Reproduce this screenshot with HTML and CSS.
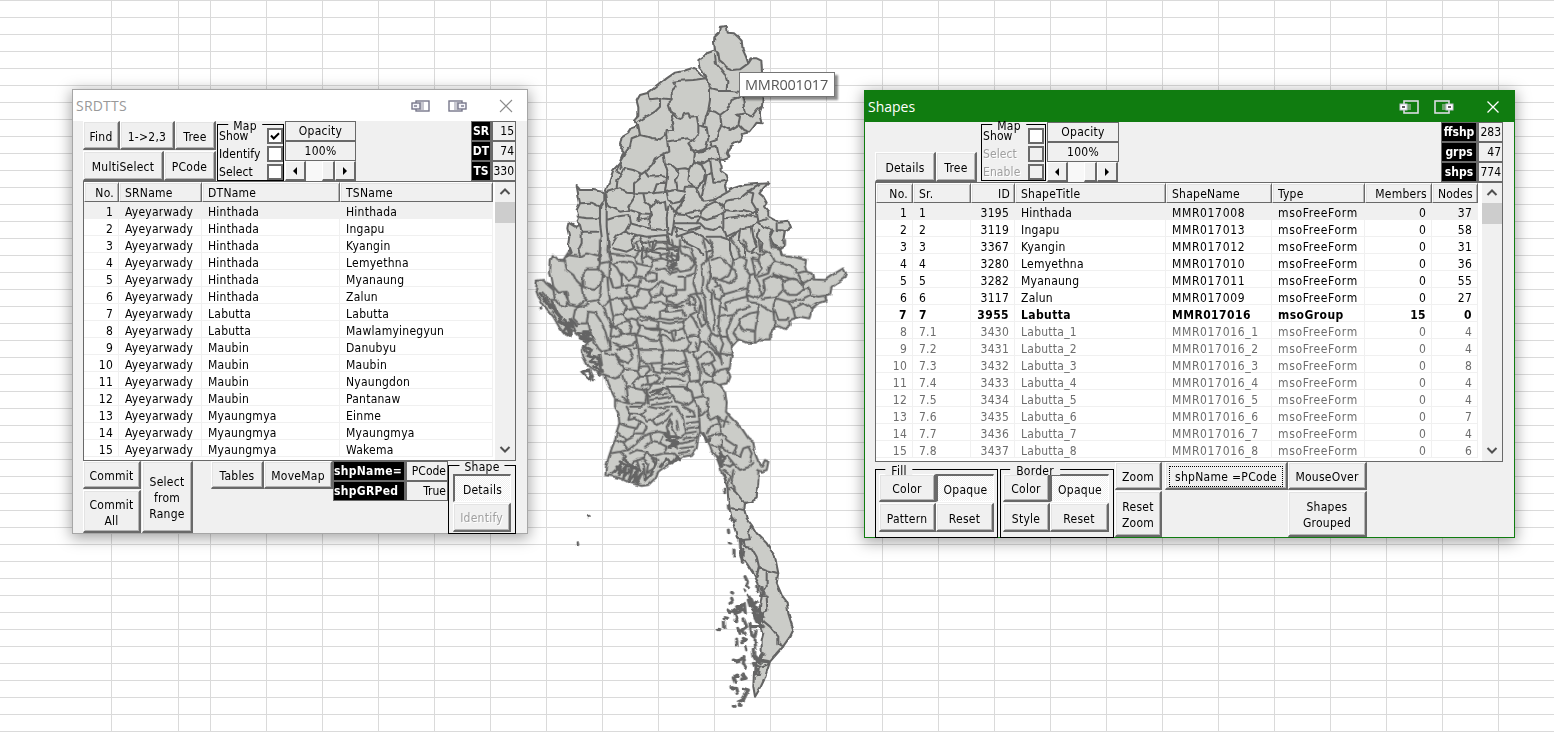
FILE: index.html
```html
<!DOCTYPE html>
<html lang="en">
<head>
<meta charset="utf-8">
<title>Township shapes</title>
<link rel="stylesheet" href="styles.css">
</head>
<body>
<main class="sheet">
<svg class="map" width="1554" height="732" viewBox="0 0 1554 732">
  <defs>
    <filter id="rough" x="0" y="0" width="1554" height="732" filterUnits="userSpaceOnUse" color-interpolation-filters="sRGB">
      <feTurbulence type="fractalNoise" baseFrequency="0.15" numOctaves="1" seed="4" result="n"/>
      <feDisplacementMap in="SourceGraphic" in2="n" scale="4" xChannelSelector="R" yChannelSelector="G"/>
    </filter>
  </defs>
  <g filter="url(#rough)">
    <!-- land -->
    <g class="land">
      <path transform="translate(560 10) scale(.33333)" d="M480,50 500,48 503,68 522,70 535,82 545,92 548,118 558,140 565,160 575,145 590,145 604,152 606,185 608,262 606,290 600,305 600,322 605,340 590,338 580,352 568,367 545,372 548,385 540,395 525,400 508,412 500,430 508,443 490,450 478,448 485,470 485,485 500,495 505,510 495,525 500,548 520,535 550,525 590,522 625,520 610,535 598,550 610,560 620,578 612,590 625,605 625,620 640,628 655,635 685,632 693,652 675,662 670,690 672,705 660,715 665,735 700,740 735,745 660,800 30,800 5,750 20,740 35,728 25,700 28,680 22,655 25,638 45,650 60,645 50,635 55,620 50,600 60,580 55,555 50,528 60,540 100,540 130,545 135,550 148,515 160,480 178,460 190,430 190,415 180,405 185,382 205,370 215,355 235,348 222,332 235,318 235,292 230,272 240,255 265,248 295,225 320,205 345,188 370,183 395,175 410,182 425,198 438,205 428,185 418,172 415,150 430,140 445,125 465,118 462,100 463,82 476,70Z"/>
      <path transform="translate(520 240) scale(.33333)" d="M150,30 785,30 785,45 810,48 840,55 858,60 855,80 860,95 875,100 880,118 915,120 945,100 970,85 978,100 972,115 935,140 930,165 915,170 920,182 895,190 875,205 868,235 840,230 810,240 812,255 795,267 775,258 760,265 750,285 750,298 720,298 710,308 680,308 655,298 635,320 638,335 632,360 630,380 622,395 628,410 620,430 600,435 615,455 620,490 618,515 630,530 645,545 665,565 685,595 700,605 705,640 715,665 725,680 735,660 745,665 740,690 725,695 715,690 715,720 712,755 625,755 615,715 605,700 600,680 592,655 575,635 565,605 555,590 540,575 535,590 530,625 515,645 490,650 460,665 435,680 415,695 405,715 385,735 365,738 330,728 300,715 275,708 256,705 258,680 265,655 275,625 285,600 290,575 298,550 295,520 285,500 285,475 275,455 262,430 255,405 235,400 205,380 190,350 185,330 205,305 180,290 160,270 140,290 120,265 100,230 75,200 55,170 48,150 50,122 70,120 80,132 100,140 95,115 90,100 92,60 98,45 110,58 130,60 140,45Z"/>
      <path transform="translate(560 440) scale(.33333)" d="M505,140 593,140 590,175 575,185 555,188 553,210 560,235 575,255 590,280 620,310 645,350 655,400 650,430 665,465 680,485 685,520 700,570 690,590 665,625 630,665 622,690 612,720 600,745 585,770 580,740 582,700 585,670 600,655 605,640 605,600 610,580 600,550 600,500 605,470 595,430 580,400 560,370 545,350 545,300 530,290 520,250 510,215 505,180Z"/>
    </g>
    <!-- northern townships -->
    <path class="border" transform="translate(560 10) scale(.33333)" d="M20,740 35,728 25,700 28,680 22,655 25,638 45,650 60,645 50,635 55,620 50,600 60,580 55,555 50,528 60,540 100,540 130,545 135,550 148,515 160,480 178,460 190,430 190,415 180,405 185,382 205,370 215,355 235,348 222,332 235,318 235,292 230,272 240,255 265,248 295,225 320,205 345,188 370,183 395,175 410,182 425,198 438,205 428,185 418,172 415,150 430,140 445,125 465,118 462,100 463,82 476,70 480,50 500,48 503,68 522,70 535,82 545,92 548,118 558,140 565,160 575,145 590,145 604,152 606,185 608,262 606,290 600,305 600,322 605,340 590,338 580,352 568,367 545,372 548,385 540,395 525,400 508,412 500,430 508,443 490,450 478,448 485,470 485,485 500,495 505,510 495,525 500,548 520,535 550,525 590,522 625,520 610,535 598,550 610,560 620,578 612,590 625,605 625,620 640,628 655,635 685,632 693,652 675,662 670,690 672,705 660,715 665,735
    M465,118 475,130 478,150 490,160 500,172 520,180 540,178 565,160 M465,135 468,160 480,175 495,195 502,215 500,240 M438,205 450,225 455,238 475,243 500,242 540,245
    M265,248 270,268 300,265 335,268 335,245 350,230 340,215 360,212 400,210 438,205 M335,268 322,280 330,305 345,312 355,325 365,328 372,312 385,310 390,320 410,318 415,345
    M235,335 262,318 285,305 300,290 300,270 M235,348 240,375 262,380 275,385 285,385 300,388 318,375 320,360 340,360 335,335 340,312 M450,240 450,270 445,300 435,330 432,350 M445,300 465,305 480,315 500,300 515,270 540,262
    M415,345 440,352 445,385 438,415 415,425 395,415 385,400 400,390 415,370 415,345 M480,315 485,345 475,365 470,390 M482,345 510,360 535,345 540,320 530,315 555,310 575,320 590,300 605,290 M550,262 552,295 555,310 M535,345 550,360 568,367
    M470,390 455,395 452,410 470,408 475,430 478,448 M318,375 322,395 350,390 385,385 400,395 M322,395 325,425 310,432 315,460 335,465 350,478 375,475 390,478 402,455 405,430 395,415
    M240,375 215,385 210,410 195,430 180,455 185,475 M310,432 285,445 275,465 255,485 245,492 220,480 195,475 185,495 172,485 178,460 M405,430 430,425 450,415 M478,448 455,445 430,460 405,455
    M185,495 172,510 170,535 M245,492 240,505 222,520 222,550 M315,460 322,485 320,510 315,545 M255,485 265,500 300,498 315,500 M350,478 355,490 345,510 350,540 M390,478 385,510 400,530 375,530 372,545
    M402,455 425,465 435,485 432,510 415,530 400,530 M450,445 455,485 460,515 485,515 505,510 M455,485 440,495 435,520 430,540 425,560 435,575 420,560 410,535 M433,575 460,570 500,548
    M135,550 145,545 180,535 200,548 222,550 225,560 205,590 210,600 180,605 150,590 140,580 135,550 M130,545 130,575 120,590 120,640 125,680 120,720 115,750 M135,560 140,600 140,650 145,700 150,730 155,750
    M60,580 95,578 120,590 M50,620 80,625 115,625 M60,645 65,665 115,665 M65,665 65,700 55,720 60,735 M222,550 250,550 255,575 275,590 290,570 300,580 315,575 318,600 M210,600 240,610 275,612 270,590 M280,550 290,520 315,518 M250,550 280,550 320,545 345,540 375,545
    M320,545 325,570 340,580 360,575 375,555 M375,555 365,580 345,610 M325,590 320,620 322,670 335,675 340,650 345,610 330,585 M345,610 375,612 425,600 435,590 465,575 490,590 495,605 470,620 440,630 420,620 425,600
    M495,600 520,603 550,600 580,610 590,600 575,575 580,550 565,545 540,565 500,572 485,590 M565,545 598,525 M495,625 530,620 560,615 590,620 M345,640 380,640 420,640 435,655 460,660 480,650 495,665 500,680 530,665 545,655 575,650 595,635 620,628
    M375,612 395,625 420,620 410,640 M350,655 385,662 420,650 M490,610 490,655 M590,600 595,635 610,650 M595,660 590,680 605,700 600,725 M610,650 640,660 630,680 640,705 660,715 M650,640 650,660 675,662 M575,650 580,680 590,710 575,730
    M140,630 170,620 205,615 210,640 195,665 170,680 155,705 M240,610 235,630 265,625 275,612 M210,640 265,655 315,660 M265,625 270,655 M195,665 230,675 260,680 320,675 M230,675 215,690 220,715 200,725 160,715 M245,700 275,695 320,695 M240,680 250,710 245,740 M280,695 275,725 300,730 M320,675 325,700 355,715 355,750
    M345,650 350,680 380,670 400,665 440,690 455,710 460,720 440,725 M365,680 380,700 410,715 430,735 M440,680 480,680 510,690 525,670 M510,690 510,720 520,750 M540,660 535,690 555,710 555,740 M225,720 260,725 300,715 350,720"/>
    <!-- central townships -->
    <path class="border" transform="translate(520 240) scale(.33333)" d="M795,0 795,15 780,25 785,45 810,48 840,55 858,60 855,80 860,95 875,100 880,118 915,120 945,100 970,85 978,100 972,115 935,140 930,165 915,170 920,182 895,190 875,205 868,235 840,230 810,240 812,255 795,267 775,258 760,265 750,285 750,298 720,298 710,308 680,308 655,298 635,320 638,335 632,360 630,380 622,395 628,410 620,430 600,435 615,455 620,490 618,515 630,530 645,545 665,565 685,595 700,605 705,640 715,665 725,680 735,660 745,665 740,690 725,695 715,690 715,720 712,750
    M625,750 615,715 605,700 600,680 592,655 575,635 565,605 555,590 540,575 535,590 530,625 515,645 490,650 460,665 435,680 415,695 405,715 385,735 365,738 330,728 300,715 275,708 256,705 258,680 265,655 275,625 285,600 290,575 298,550 295,520 285,500 285,475 275,455 262,430 255,405 235,400 205,380 190,350 185,330 205,305 180,290 160,270 140,290 120,265 100,230 75,200 55,170 48,150 50,122 70,120 80,132 100,140 95,115 90,100 92,60 98,45 110,58 130,60 140,45 150,30
    M140,45 180,50 200,40 235,50 240,70 235,85 200,85 190,100 185,140 170,125 160,105 140,90 135,60 M235,85 250,100 245,130 220,150 190,140 190,100 M240,70 270,65 M240,0 240,70 M265,0 262,30 270,65 268,110 280,145 M185,140 190,170 200,180 205,195 180,200 165,210 160,235 M245,130 240,160 235,180 205,185 M135,160 150,195 M100,140 115,158 140,155 145,185 140,200 120,195 110,180
    M245,105 262,110 265,150 270,180 M235,180 250,200 262,230 275,260 270,300 272,330 M150,195 170,200 200,180 M80,132 100,150 105,180 85,180 70,160 M160,235 175,250 200,250 205,215 225,218 240,240 255,270 265,310 270,330 245,335 235,325 215,290 205,250 M250,200 270,180
    M270,65 290,82 305,110 305,140 280,145 270,110 M270,40 310,45 345,50 360,30 345,10 365,0 M280,70 310,65 340,70 350,85 345,110 325,120 305,100 M345,50 350,70 370,75 365,55 380,45 375,25 395,30 410,10 405,0 M385,0 390,20 M380,45 400,60 395,80 370,75 M400,60 425,55 440,60 455,75 M410,10 440,10 445,40 420,45 425,55
    M345,110 375,115 385,95 395,80 M385,95 410,100 410,120 380,125 375,115 M410,90 435,85 450,100 470,95 M280,145 310,140 325,135 355,140 360,120 M325,135 320,160 330,175 350,165 360,145 M270,180 300,175 330,175 M360,145 385,150 410,140 420,125 M385,150 395,170 420,165 425,140 M420,125 440,130 465,140 470,160 440,170 425,160
    M440,10 445,40 440,75 455,95 M445,50 460,45 475,50 470,70 455,75 460,90 472,85 M485,40 510,50 525,70 510,90 480,95 470,85 M480,0 480,30 485,40 M440,25 480,20 M455,0 460,20 M480,15 510,25 520,50 530,70 525,100 495,110 475,110 M495,110 495,150 470,150 M525,100 520,130 530,160 510,165 505,190
    M270,180 275,210 280,230 310,220 320,200 305,180 M310,220 320,240 335,235 350,240 360,225 345,205 320,210 M280,230 275,260 300,250 325,245 335,260 330,280 305,285 295,265 M275,290 305,285 345,280 350,300 340,315 300,320 280,310 M275,260 295,265
    M330,175 340,200 370,205 390,190 395,170 M390,190 420,185 440,195 440,210 420,215 420,235 390,235 360,225 M440,170 440,185 470,195 500,180 M440,195 465,200 490,200 M420,215 450,215 490,210 495,225 M420,235 450,240 490,235 M360,240 395,240 415,245 415,265 380,265 360,255 M415,245 450,250 490,245 M415,265 445,275 490,265 M350,240 360,265 350,285 M380,265 400,270 420,270 420,300 395,300 370,290 M350,285 370,290
    M350,300 355,325 M355,330 430,330 M420,300 430,330 490,332 M415,285 440,290 455,305 490,295 M455,275 460,300 M467,275 465,300 M490,265 500,290 520,285 540,290 535,265 520,235 510,225 495,240 490,265 M500,190 525,195 530,215 510,225 M505,170 520,170 525,195 M430,330 425,370 430,400 M355,330 360,360 355,390
    M290,330 310,320 330,330 340,350 325,370 300,360 285,345 M340,325 355,325 M255,340 285,345 300,370 310,385 300,410 285,415 255,405 M360,365 390,370 425,368 M430,370 470,372 500,362 490,332 M310,385 350,390 360,410 340,430 345,445 320,440 310,410 M360,380 385,378 390,390 375,405 M395,375 400,395 425,400 M430,385 470,388 500,380 M435,400 455,395 490,405 500,395 M435,415 470,415 495,425
    M360,410 380,410 385,430 365,440 M385,410 410,405 420,415 400,430 385,435 M400,430 430,430 435,415 M345,445 370,450 385,445 395,435 M370,450 380,465 390,470 M390,455 430,445 440,450 M395,465 440,460 M390,480 420,475 450,470 M395,495 430,490 455,485 M385,500 410,505 445,500 M440,440 450,460 470,485 500,495 520,480 515,455 490,440 440,440 M325,490 310,470 M320,440 325,490 285,480 M325,490 355,488 375,490 380,465
    M490,332 520,335 530,360 540,390 540,420 510,425 505,395 495,362 M510,425 500,440 515,455 520,475 550,468 545,440 535,425 M530,360 545,345 560,335 575,340 585,360 570,370 545,375 M545,375 550,395 575,410 585,390 575,370 M575,410 600,390 622,385 M575,410 580,425 600,435 M545,440 555,425 580,425 M550,468 565,475 562,510 540,530 535,500 520,475 M500,290 510,310 500,330 M540,290 540,310 555,305 575,325 590,340 M525,310 535,330 520,335 M540,310 535,325
    M550,0 560,40 560,60 545,75 550,120 545,160 530,160 M570,0 580,30 575,45 565,60 570,100 565,120 M575,60 600,50 620,65 635,85 625,105 600,120 575,115 565,95 M545,160 555,180 560,250 575,280 M565,120 560,140 575,160 575,190 585,230 580,270 M585,140 600,135 610,160 600,180 585,175 580,150 M585,120 590,135 M530,165 540,180 555,250 545,260 535,230 540,195
    M600,120 630,130 650,110 645,90 635,85 M635,85 640,60 660,50 650,20 635,0 M660,50 680,60 675,85 690,105 705,100 700,75 695,55 715,60 M670,0 685,30 720,45 715,60 725,85 710,105 M720,45 740,35 755,45 765,65 745,80 745,100 715,110 M765,65 800,75 830,85 825,100 855,95 M755,70 745,100 M760,100 790,110 830,120 M715,0 720,30 740,35 M750,0 755,20 780,25
    M690,105 685,130 680,165 710,175 725,165 720,140 705,105 M725,165 735,150 730,120 760,105 785,115 790,150 770,170 725,175 M785,125 820,115 845,130 850,150 830,165 805,165 790,150 M830,100 850,130 875,115 M850,150 865,145 870,165 840,180 805,185 M870,165 895,170 930,165 M805,185 770,175 760,200 775,240 800,240 805,230 M805,185 820,210 825,230 M820,205 850,190 875,205
    M605,165 640,155 680,145 M600,185 600,200 620,210 615,190 640,180 680,170 M680,165 685,185 715,190 715,215 690,220 660,235 655,250 670,270 705,275 710,240 715,215 M715,190 740,205 760,215 765,265 M600,230 640,225 655,210 690,200 M640,225 630,250 620,275 625,300 M600,200 595,260 600,290 620,290 M620,290 635,315 M655,250 640,280 655,300 M705,275 705,305
    M575,280 600,290 610,310 600,340 605,370 M575,280 565,300 590,330 600,355 M600,340 632,345
    M298,550 325,560 350,565 360,545 345,535 325,540 330,520 320,500 M330,500 365,500 375,490 M330,520 360,525 380,510 M365,525 380,545 400,540 415,525 445,510 M400,540 410,555 440,540 455,520 M360,545 380,560 370,580 350,580 M290,575 320,600 340,590 345,570 M285,600 310,610 320,600 M310,610 325,630 350,610 365,590 M270,640 300,635 325,630 M365,590 390,580 395,605 375,620 M390,580 415,575 440,580 M395,605 420,610 430,590
    M455,500 470,500 490,540 495,580 475,595 455,560 450,540 M490,500 520,515 525,530 500,530 M450,540 440,560 445,580 M470,540 475,570 M500,550 535,545 M500,565 535,560 M495,580 530,575 M490,595 530,590 M485,610 525,600 M480,625 520,620 M475,640 505,635 M420,610 440,620 430,640 390,650 385,635 M430,640 460,640 475,655 M300,635 315,650 300,680 275,700 M330,640 350,630 380,635 370,655 340,665 M350,660 360,690 M370,655 385,670 380,700 400,690 415,660 395,655 M340,665 325,690
    M535,500 538,540 540,575 M562,510 570,540 590,530 600,550 570,560 560,580 M590,530 605,540 625,550 M600,550 605,580 620,600 650,620 640,640 660,650 670,625 685,620 M605,580 580,585 565,590 M605,600 605,620 630,640 640,640 M575,615 600,620 605,650 590,655 M605,650 625,650 640,670 630,680 M640,670 660,690 690,680 700,665 M685,620 695,640 690,665 M630,680 610,670 M640,690 635,720 645,750 M610,690 630,705 625,730 M620,530 610,560"/>
    <!-- southern townships -->
    <path class="border" transform="translate(560 440) scale(.33333)" d="M593,120 590,175 575,185 555,188 553,210 560,235 575,255 590,280 620,310 645,350 655,400 650,430 665,465 680,485 685,520 700,570 690,590 665,625 630,665 622,690 612,720 600,745 585,770 580,740 582,700 585,670 600,655 605,640 605,600 610,580 600,550 600,500 605,470 595,430 580,400 560,370 545,350 545,300 530,290 520,250 510,215 505,180 502,140 490,100
    M510,140 530,160 550,185 M515,205 553,210 M575,255 565,280 570,298 545,300 M550,300 555,320 575,325 590,350 597,380 590,410 M545,300 540,340 548,368 553,330 M597,380 620,390 655,400 M620,395 620,440 605,465 M605,465 620,470 622,510 600,520 M600,520 612,545 630,560 655,590 655,610 670,620 M605,640 605,665 630,665 M585,675 600,680 597,705 582,705 M600,680 620,675"/>
    <!-- coastal islands and delta channels -->
    <path class="coast" transform="translate(520 240) scale(.33333)" d="M60,160 90,200 75,175 105,215 95,185 115,230 100,215 130,250 M110,215 125,235 115,245 140,260 130,275 150,290 135,240 155,285 145,245 165,270 150,235 170,255 M175,280 210,285 180,295 215,300 195,305 210,275 190,275 215,290 M190,320 215,330 200,345 225,350 210,365 235,370 220,380 245,395 230,350 245,375 240,345 M195,330 205,340 M185,395 210,392 218,410 205,415 195,405 185,395 M212,408 218,420 M62,205 63,208 M235,390 238,405
    M455,40 462,85 M450,65 472,60 M450,80 468,75 M285,695 305,670 295,705 320,675 310,715 340,680 325,725 355,690 340,728 365,700 350,730 M300,665 350,690 M310,655 340,680 360,690 M290,680 320,700 M370,670 375,720 395,700 410,670 400,660 M420,680 440,655 455,670 470,650 480,660 M440,600 480,610 450,620 475,590 445,590 470,625 460,600 M435,580 450,600 445,575 M550,580 560,605 570,595 M590,650 605,680 M600,640 615,655 605,665 M380,450 385,490 M395,455 425,450 410,460"/>
    <path class="coast isles" transform="translate(560 440) scale(.33333)" d="M480,50 485,75 M493,150 494,158 M505,195 506,205 M515,235 522,242 M505,270 506,278 M508,308 512,309 M522,330 522,348 M84,230 87,229 M52,308 53,314 M540,300 548,370 M555,410 562,425 558,435 565,440 M552,450 554,452 M515,457 518,459 M590,440 592,455 M605,440 612,460 M565,465 575,480 580,495 570,490 585,505 M510,490 515,487 M515,475 517,480 M505,510 512,515 M530,500 545,495 540,515 525,520 530,535 M520,515 535,505 550,510 M553,490 556,520 M575,495 590,500 600,515 580,510 595,530 605,540 585,535 600,550 610,560 575,560 M565,480 570,500 590,485 M580,520 590,545 600,520 610,530 M495,533 503,535 M493,545 494,565 M472,568 480,569 M525,540 530,542 M533,565 540,580 M552,540 560,560 545,570 555,580 M570,550 572,565 575,585 583,592 588,575 M530,600 531,618 M550,595 560,600 545,605 M555,620 557,630 M585,600 587,625 M520,660 530,663 540,660 M552,650 550,670 558,685 M580,630 582,650 590,665 600,650 610,640 M585,650 600,670 M580,670 590,690 585,705 595,690 M600,660 625,665 M545,655 553,660 M520,710 530,705 538,708 M520,715 525,730 M550,705 558,715 545,718 M516,743 520,744 M527,745 531,760 M548,745 565,750 555,765 545,780 M520,798 522,799 M535,795 543,796 M535,785 550,780 560,760"/>
  </g>
</svg>

<div class="tip">MMR001017</div>

<section class="window window-regions">
  <header class="title"><span class="caption">SRDTTS</span>
    <svg class="dock" width="19" height="12" viewBox="0 0 19 12"><rect x="5" y="1" width="13" height="10"/><path class="pane" d="M9 2h4v8H9z"/><rect class="tab" x="1" y="3" width="8" height="6"/><path d="M3 6h3"/></svg>
    <svg class="dock" width="19" height="12" viewBox="0 0 19 12"><rect x="1" y="1" width="13" height="10"/><path class="pane" d="M6 2h4v8H6z"/><rect class="tab" x="10" y="3" width="8" height="6"/><path d="M13 6h3"/></svg>
    <svg class="close" width="14" height="14" viewBox="0 0 14 14"><path d="M1 1 13 13M13 1 1 13"/></svg>
  </header>
  <div class="body">
    <div class="tools">
      <div class="tool-buttons">
        <div class="line top-line"><button class="btn find">Find</button><button class="btn order">1-&gt;2,3</button><button class="btn tree">Tree</button></div>
        <div class="line"><button class="btn multi">MultiSelect</button><button class="btn pcode">PCode</button></div>
      </div>
      <div class="group map-group"><span class="legend">Map</span>
        <label>Show<i class="box"><svg width="10" height="9" viewBox="0 0 10 9"><path d="M1 3.5 3.7 6.5 9 1.2"/></svg></i></label><label>Identify<i class="box"></i></label><label>Select<i class="box"></i></label>
      </div>
      <div class="opacity"><div>Opacity</div><div>100%</div>
        <div class="slider"><b class="arrow left"></b><b class="track"></b><b class="thumb"></b><b class="arrow right"></b></div></div>
      <dl class="stats"><dt>SR</dt><dd>15</dd><dt>DT</dt><dd>74</dd><dt>TS</dt><dd>330</dd></dl>
    </div>
    <div class="list">
      <table>
        <colgroup><col class="w36"><col class="w83"><col class="w138"><col class="w153"></colgroup>
        <thead><tr><th class="num">No.</th><th>SRName</th><th>DTName</th><th>TSName</th></tr></thead>
        <tbody>
<tr class="current"><td>1</td><td>Ayeyarwady</td><td>Hinthada</td><td>Hinthada</td></tr>
<tr><td>2</td><td>Ayeyarwady</td><td>Hinthada</td><td>Ingapu</td></tr>
<tr><td>3</td><td>Ayeyarwady</td><td>Hinthada</td><td>Kyangin</td></tr>
<tr><td>4</td><td>Ayeyarwady</td><td>Hinthada</td><td>Lemyethna</td></tr>
<tr><td>5</td><td>Ayeyarwady</td><td>Hinthada</td><td>Myanaung</td></tr>
<tr><td>6</td><td>Ayeyarwady</td><td>Hinthada</td><td>Zalun</td></tr>
<tr><td>7</td><td>Ayeyarwady</td><td>Labutta</td><td>Labutta</td></tr>
<tr><td>8</td><td>Ayeyarwady</td><td>Labutta</td><td>Mawlamyinegyun</td></tr>
<tr><td>9</td><td>Ayeyarwady</td><td>Maubin</td><td>Danubyu</td></tr>
<tr><td>10</td><td>Ayeyarwady</td><td>Maubin</td><td>Maubin</td></tr>
<tr><td>11</td><td>Ayeyarwady</td><td>Maubin</td><td>Nyaungdon</td></tr>
<tr><td>12</td><td>Ayeyarwady</td><td>Maubin</td><td>Pantanaw</td></tr>
<tr><td>13</td><td>Ayeyarwady</td><td>Myaungmya</td><td>Einme</td></tr>
<tr><td>14</td><td>Ayeyarwady</td><td>Myaungmya</td><td>Myaungmya</td></tr>
<tr><td>15</td><td>Ayeyarwady</td><td>Myaungmya</td><td>Wakema</td></tr>
        </tbody>
      </table>
      <div class="scroll"><svg width="20" height="20" viewBox="0 0 20 20"><path d="M5.5 12 10 7.5 14.5 12"/></svg><b></b><svg class="down" width="20" height="20" viewBox="0 0 20 20"><path d="M5.5 7 10 11.5 14.5 7"/></svg></div>
    </div>
    <div class="foot">
      <div class="stack commits"><button class="btn">Commit</button><button class="btn">Commit<br>All</button></div>
      <button class="btn range">Select<br>from<br>Range</button>
      <button class="btn tables">Tables</button><button class="btn move">MoveMap</button>
      <dl class="stats names"><dt>shpName=</dt><dd>PCode</dd><dt>shpGRPed</dt><dd>True</dd></dl>
      <div class="group shape-group"><span class="legend">Shape</span><button class="btn pressed">Details</button><button class="btn off">Identify</button></div>
    </div>
  </div>
</section>

<section class="window window-shapes">
  <header class="title"><span class="caption">Shapes</span>
    <svg class="dock" width="20" height="14" viewBox="0 0 20 14"><rect x="5" y="1" width="14" height="12"/><path class="pane" d="M8 4h4v6H8z"/><rect class="tab" x="1" y="4" width="7" height="6"/><path class="dash" d="M3 7h3"/></svg>
    <svg class="dock" width="20" height="14" viewBox="0 0 20 14"><rect x="1" y="1" width="14" height="12"/><path class="pane" d="M8 4h4v6H8z"/><rect class="tab" x="12" y="4" width="7" height="6"/><path class="dash" d="M14 7h3"/></svg>
    <svg class="close" width="14" height="14" viewBox="0 0 14 14"><path d="M1.5 1.5 12.5 12.5M12.5 1.5 1.5 12.5"/></svg>
  </header>
  <div class="body">
    <div class="tools">
      <div class="tool-buttons"><div class="line"><button class="btn details">Details</button><button class="btn tree">Tree</button></div></div>
      <div class="group map-group"><span class="legend">Map</span>
        <label>Show<i class="box"></i></label><label class="dim">Select<i class="box"></i></label><label class="dim">Enable<i class="box"></i></label>
      </div>
      <div class="opacity"><div>Opacity</div><div>100%</div>
        <div class="slider"><b class="arrow left"></b><b class="track"></b><b class="thumb"></b><b class="arrow right"></b></div></div>
      <dl class="stats"><dt>ffshp</dt><dd>283</dd><dt>grps</dt><dd>47</dd><dt>shps</dt><dd>774</dd></dl>
    </div>
    <div class="list">
      <table>
        <colgroup><col class="w37"><col class="w58"><col class="w44"><col class="w151"><col class="w106"><col class="w93"><col class="w66"><col class="w47"></colgroup>
        <thead><tr><th class="num">No.</th><th>Sr.</th><th class="num">ID</th><th>ShapeTitle</th><th>ShapeName</th><th>Type</th><th class="num">Members</th><th class="num">Nodes</th></tr></thead>
        <tbody>
<tr class="current"><td>1</td><td>1</td><td>3195</td><td>Hinthada</td><td>MMR017008</td><td>msoFreeForm</td><td>0</td><td>37</td></tr>
<tr><td>2</td><td>2</td><td>3119</td><td>Ingapu</td><td>MMR017013</td><td>msoFreeForm</td><td>0</td><td>58</td></tr>
<tr><td>3</td><td>3</td><td>3367</td><td>Kyangin</td><td>MMR017012</td><td>msoFreeForm</td><td>0</td><td>31</td></tr>
<tr><td>4</td><td>4</td><td>3280</td><td>Lemyethna</td><td>MMR017010</td><td>msoFreeForm</td><td>0</td><td>36</td></tr>
<tr><td>5</td><td>5</td><td>3282</td><td>Myanaung</td><td>MMR017011</td><td>msoFreeForm</td><td>0</td><td>55</td></tr>
<tr><td>6</td><td>6</td><td>3117</td><td>Zalun</td><td>MMR017009</td><td>msoFreeForm</td><td>0</td><td>27</td></tr>
<tr class="parent"><td>7</td><td>7</td><td>3955</td><td>Labutta</td><td>MMR017016</td><td>msoGroup</td><td>15</td><td>0</td></tr>
<tr class="child"><td>8</td><td>7.1</td><td>3430</td><td>Labutta_1</td><td>MMR017016_1</td><td>msoFreeForm</td><td>0</td><td>4</td></tr>
<tr class="child"><td>9</td><td>7.2</td><td>3431</td><td>Labutta_2</td><td>MMR017016_2</td><td>msoFreeForm</td><td>0</td><td>4</td></tr>
<tr class="child"><td>10</td><td>7.3</td><td>3432</td><td>Labutta_3</td><td>MMR017016_3</td><td>msoFreeForm</td><td>0</td><td>8</td></tr>
<tr class="child"><td>11</td><td>7.4</td><td>3433</td><td>Labutta_4</td><td>MMR017016_4</td><td>msoFreeForm</td><td>0</td><td>4</td></tr>
<tr class="child"><td>12</td><td>7.5</td><td>3434</td><td>Labutta_5</td><td>MMR017016_5</td><td>msoFreeForm</td><td>0</td><td>4</td></tr>
<tr class="child"><td>13</td><td>7.6</td><td>3435</td><td>Labutta_6</td><td>MMR017016_6</td><td>msoFreeForm</td><td>0</td><td>7</td></tr>
<tr class="child"><td>14</td><td>7.7</td><td>3436</td><td>Labutta_7</td><td>MMR017016_7</td><td>msoFreeForm</td><td>0</td><td>4</td></tr>
<tr class="child"><td>15</td><td>7.8</td><td>3437</td><td>Labutta_8</td><td>MMR017016_8</td><td>msoFreeForm</td><td>0</td><td>6</td></tr>
        </tbody>
      </table>
      <div class="scroll"><svg width="20" height="20" viewBox="0 0 20 20"><path d="M5.5 12 10 7.5 14.5 12"/></svg><b></b><svg class="down" width="20" height="20" viewBox="0 0 20 20"><path d="M5.5 7 10 11.5 14.5 7"/></svg></div>
    </div>
    <div class="foot">
      <div class="group paint fill-group"><span class="legend">Fill</span><button class="btn">Color</button><button class="btn pressed">Opaque</button><button class="btn">Pattern</button><button class="btn">Reset</button></div>
      <div class="group paint border-group"><span class="legend">Border</span><button class="btn">Color</button><button class="btn pressed">Opaque</button><button class="btn">Style</button><button class="btn">Reset</button></div>
      <div class="stack zooms"><button class="btn">Zoom</button><button class="btn">Reset<br>Zoom</button></div>
      <button class="btn focus"><span>shpName =PCode</span></button>
      <div class="stack overs"><button class="btn">MouseOver</button><button class="btn">Shapes<br>Grouped</button></div>
    </div>
  </div>
</section>
</main>
</body>
</html>
```
FILE: styles.css
```css
* { box-sizing: border-box; }
body { margin: 0; }
.sheet {
  position: relative; width: 1554px; height: 732px; overflow: hidden;
  font: 12px/16px "DejaVu Sans Condensed", "DejaVu Sans", sans-serif; font-stretch: condensed; letter-spacing: .25px; color: #000;
  background-color: #fff;
  background-image:
    linear-gradient(#dadada, #dadada), linear-gradient(#dadada, #dadada),
    repeating-linear-gradient(90deg, #dadada 0 1px, transparent 1px 56px),
    repeating-linear-gradient(#dadada 0 1px, transparent 1px 17px);
  background-size: 1px 100%, 1px 100%, 1344px 100%, 100% 100%;
  background-position: 111px 0, 178px 0, 210px 0, 0 0;
  background-repeat: no-repeat;
}
.map { position: absolute; left: 0; top: 0; }
.land { fill: #cbccc8; }
.border, .coast { fill: none; stroke: #646464; stroke-width: 6.2; stroke-linejoin: round; stroke-linecap: round; }
.coast { stroke-width: 8; }
.isles { stroke-width: 9.5; }
.tip {
  position: absolute; left: 739px; top: 72px; width: 96px; height: 25px; padding-left: 5px;
  font: 14.5px/23px "Open Sans", "Noto Sans", sans-serif; font-stretch: normal; letter-spacing: -.2px; color: #575757;
  background: #fff; border: 1px solid #767676; box-shadow: 3px 3px 2px rgba(0,0,0,.45);
}

.window { position: absolute; display: flex; flex-direction: column; background: #f0f0f0; box-shadow: 0 3px 14px 1px rgba(0,0,0,.36); }
.window-regions { left: 72px; top: 89px; width: 456px; height: 445px; border: 1px solid #a6a6a6; }
.window-shapes { left: 864px; top: 90px; width: 651px; height: 448px; border: 1px solid #107c10; }
.title { display: flex; align-items: center; flex: none; height: 31px; padding: 0 14px 0 3px; background: #fff; font: 14px/20px "Open Sans", "Noto Sans", sans-serif; font-stretch: normal; letter-spacing: 0; color: #999; }
.window-shapes .title { padding-right: 14px; background: #107c10; color: #fff; }
.caption { margin-right: auto; }
.window-regions .caption { letter-spacing: .2px; }
.dock { margin-right: 18px; fill: #fff; stroke: #77778a; stroke-width: 1.4; }
.dock .pane { fill: #c8c8d0; stroke: none; }
.dock .tab { fill: #f6f6fa; }
.dock + .dock { margin-right: 32px; }
.window-shapes .dock { margin-right: 15px; fill: none; stroke: #dcdce4; stroke-width: 1.6; }
.window-shapes .dock + .dock { margin-right: 32px; }
.window-shapes .dock .pane { fill: #6fa46f; }
.window-shapes .dock .tab { fill: #fff; stroke: #c4c4d4; stroke-width: 1; }
.window-shapes .dock .dash { stroke: #333; }
.close { fill: none; stroke: #8c8c8c; stroke-width: 1.1; }
.window-shapes .close { stroke: #fff; stroke-width: 1.3; }
.body { display: flex; flex-direction: column; flex: 1; padding: 0 11px 0 10px; }

.btn {
  display: flex; align-items: center; justify-content: center; flex: none; margin: 0; padding: 2px 0 0;
  font: inherit; letter-spacing: inherit; color: #000; text-align: center; white-space: nowrap; background: #f0f0f0;
  border: solid; border-width: 1px 2px 2px 1px; border-color: #fff #696969 #696969 #fff;
  box-shadow: inset 1px 1px #e3e3e3, inset -1px -1px #b4b4b4;
}
.pressed { border-width: 2px 1px 1px 2px; border-color: #696969 #fff #fff #696969; box-shadow: none; background: repeating-conic-gradient(#fff 0 25%, #f0f0f0 0 50%) 0 0 / 2px 2px; }
.off { color: #a0a0a0; text-shadow: 1px 1px #fff; }

.tools { display: flex; flex: none; height: 60px; }
.tool-buttons { display: flex; flex-direction: column; justify-content: flex-end; width: 134px; }
.line { display: flex; height: 30px; }
.line .btn { height: 30px; padding-top: 2px; }
.top-line .btn { height: 29px; padding-top: 3px; }
.find { width: 37px; } .order { width: 55px; } .tree { width: 41px; }
.multi { width: 81px; } .pcode { width: 52px; }
.details { width: 61px; }
.window-shapes .tool-buttons { width: 106px; }

.group { position: relative; border: 1px solid #000; }
.legend { position: absolute; top: -6px; left: 50%; padding: 0 5px; line-height: 14px; transform: translateX(-50%); background: linear-gradient(#f0f0f0, #f0f0f0) 0 3px / 100% 8px no-repeat; }
.map-group { width: 67px; height: 57px; margin-top: 3px; padding: 2px 0 0 1px; }
.map-group .legend { top: -5px; left: 27px; line-height: 12px; padding: 0 5px; }
.map-group label { position: relative; display: flex; justify-content: space-between; align-items: center; height: 18px; letter-spacing: .1px; }
.map-group label.dim { color: #a0a0a0; text-shadow: 1px 1px #fff; }
.box { display: flex; align-items: center; justify-content: center; width: 16px; height: 16px; background: #fff; border: 2px solid #696969; }
.box svg { fill: none; stroke: #000; stroke-width: 2; }
.dim .box { background: #f0f0f0; }
.window-shapes .map-group { width: 65px; margin-left: 0; height: 57px; margin-top: 2px; }
.window-shapes .box { margin-right: 1px; }

.opacity { width: 71px; margin-left: 1px; }
.window-shapes .opacity { margin-left: 1px; width: 72px; }
.opacity > div { height: 20px; line-height: 19px; text-align: center; border: 1px solid #696969; border-bottom-width: 1px; }
.opacity > .slider { display: flex; height: 20px; border: 0; }
.arrow, .thumb { position: relative; height: 20px; background: #f0f0f0; border: solid; border-width: 1px 2px 2px 1px; border-color: #fff #696969 #696969 #fff; }
.arrow { display: flex; align-items: center; justify-content: center; width: 21px; }
.arrow::before { content: ""; border: 4px solid transparent; border-left: 0; border-right: 4px solid #000; }
.arrow.right::before { border-left: 4px solid #000; border-right: 0; }
.track { width: 16px; background: #f8f8f8; }
.thumb { width: 13px; }

.stats { display: grid; grid-template-columns: 20px 25px; grid-auto-rows: 20px; width: 45px; margin: 0 0 0 auto; }
.window-shapes .stats { grid-template-columns: 36px 26px; width: 62px; }
.stats dt, .stats dd { margin: 0; line-height: 19px; border: 1px solid #696969; text-align: right; white-space: nowrap; }
.stats dt { color: #fff; background: #000; font-weight: bold; text-align: center; letter-spacing: 0; }
.stats dd { border-left-width: 2px; padding-right: 1px; letter-spacing: 0; }
.stats.names { grid-template-columns: 72px 43px; width: 115px; margin: 0; }
.names dt { text-align: left; letter-spacing: .3px; }

.list { display: flex; justify-content: space-between; flex: none; height: 280px; overflow: hidden; border: 1px solid #696969; background: #fff; }
table { table-layout: fixed; border-collapse: separate; border-spacing: 0; width: 0; align-self: flex-start; }
.w36 { width: 35px; } .w83 { width: 83px; } .w138 { width: 138px; } .w153 { width: 153px; }
.w37 { width: 37px; } .w58 { width: 58px; } .w44 { width: 44px; } .w151 { width: 151px; } .w106 { width: 106px; } .w93 { width: 93px; } .w66 { width: 67px; } .w47 { width: 46px; }
th { height: 20px; padding: 1px 5px 0; font-weight: normal; text-align: left; line-height: 16px; white-space: nowrap; background: #f0f0f0; border: solid; border-width: 1px 1px 1px 1px; border-color: #fff #696969 #696969 #fff; box-shadow: inset 1px 1px #e3e3e3, inset -1px 0 #b4b4b4; }
th.num { text-align: right; padding-left: 0; padding-right: 4px; }
td { height: 17px; padding: 4px 0 0 6px; line-height: 12px; vertical-align: top; white-space: nowrap; border-right: 1px solid #f0f0f0; border-bottom: 1px solid #f0f0f0; }
.current td { background: #f0f0f0; }
.window-regions td:first-child, .window-shapes td:nth-child(1), .window-shapes td:nth-child(3), .window-shapes td:nth-child(n+7) { text-align: right; padding-right: 5px; }
.window-shapes td:nth-child(5), .window-shapes td:nth-child(6) { letter-spacing: .65px; }
.child { color: #6d6d6d; }
.parent { font-weight: bold; letter-spacing: .4px; }
.window-shapes .parent td:nth-child(5), .window-shapes .parent td:nth-child(6) { letter-spacing: .45px; }
.scroll { display: flex; flex-direction: column; width: 20px; background: #f0f0f0; }
.scroll b { height: 21px; background: #cdcdcd; }
.scroll svg { fill: none; stroke: #505050; stroke-width: 2; }
.scroll .down { margin-top: auto; }

.foot { display: flex; flex: 1; align-items: flex-start; }
.stack { display: flex; flex-direction: column; gap: 1px; }
.stack .btn:first-child, .tables, .move, .focus { height: 28px; }
.stack .btn:last-child { height: 43px; padding-top: 3px; }
.commits { width: 58px; margin-right: 1px; }
.range { width: 51px; height: 72px; margin-right: 1px; }
.tables { width: 53px; margin-left: 17px; }
.move { width: 69px; }
.shape-group { display: grid; grid-template-rows: 28px 29px; row-gap: 1px; width: 68px; height: 69px; margin-top: 4px; padding: 8px 4px 0; }
.paint { display: grid; grid-template-columns: 57px 58px; grid-template-rows: 28px 29px; row-gap: 1px; width: 123px; height: 69px; margin-top: 7px; padding: 4px 3px 0; }
.paint .btn { padding-top: 3px; }
.window-shapes .paint .legend { left: 23px; padding: 0 6px; }
.border-group { grid-template-columns: 47px 59px; width: 114px; margin-left: 2px; padding-left: 2px; }
.window-shapes .border-group .legend { left: 34px; }
.zooms { width: 47px; margin-left: 1px; margin-right: 2px; }
.focus { width: 123px; margin-left: 1px; }
.focus span { display: flex; align-items: center; justify-content: center; width: 114px; height: 21px; letter-spacing: .3px; border: 1px dotted #000; }
.overs { width: 79px; }
.window-shapes .stack .btn:last-child { height: 46px; }
```
